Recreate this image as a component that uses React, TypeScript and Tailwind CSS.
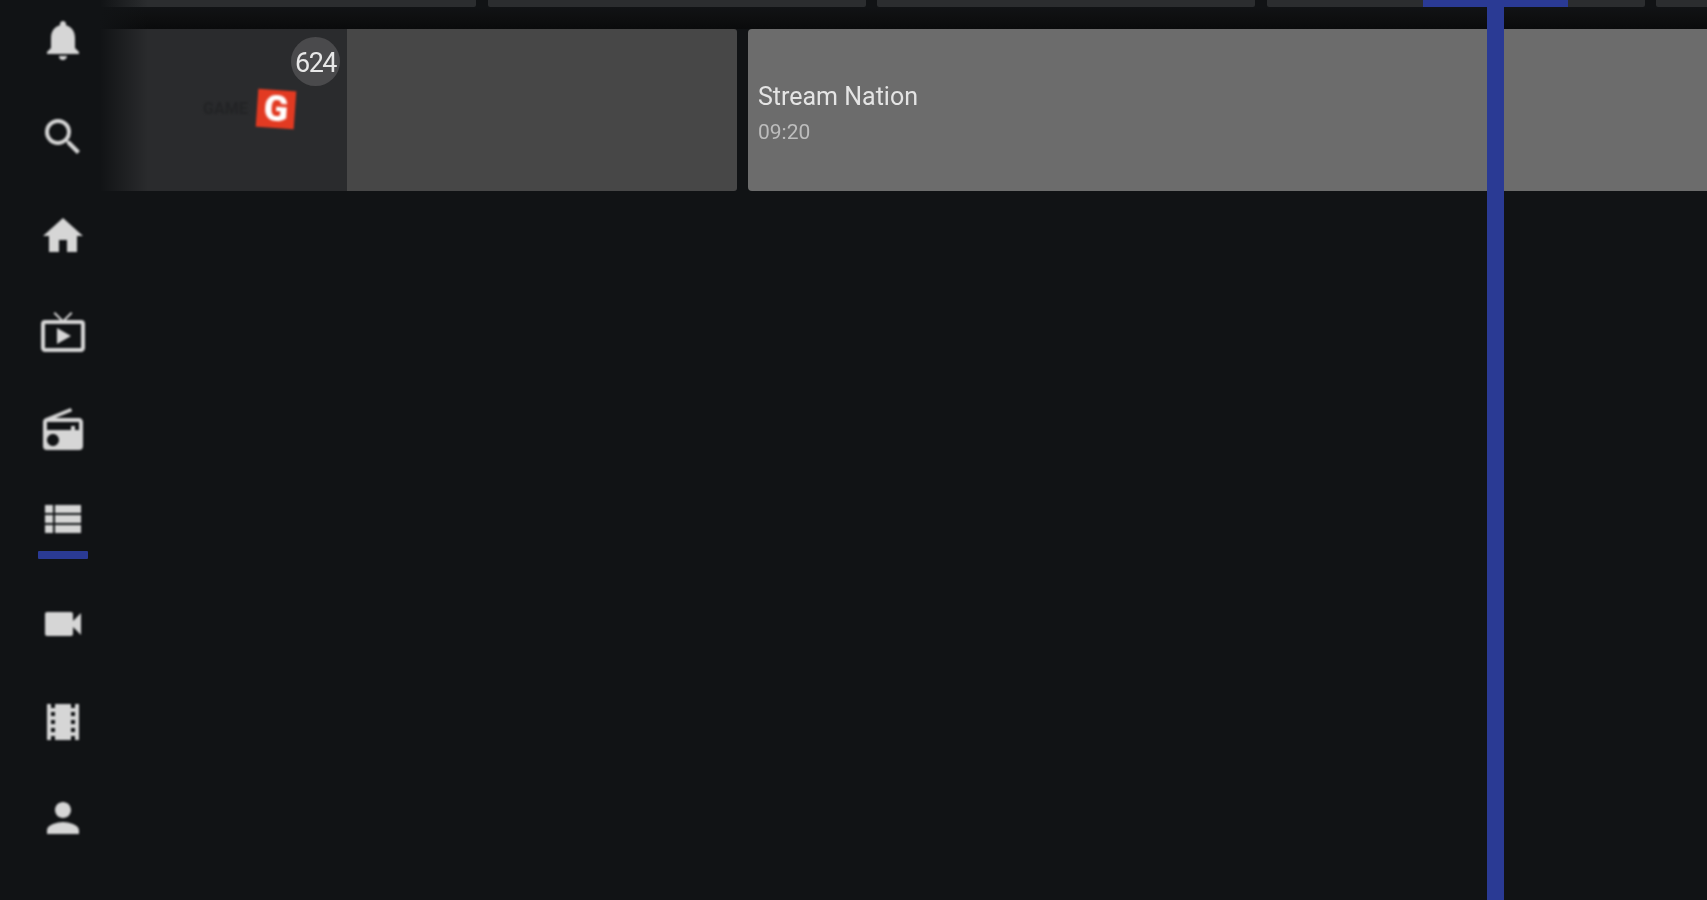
import { MdNotifications, MdSearch, MdHome, MdLiveTv, MdRadio, MdViewList, MdVideocam, MdLocalMovies, MdPerson } from "react-icons/md";

const navItems = [
  { icon: MdNotifications, gap: "mt-[16px]" },
  { icon: MdSearch, gap: "mt-[49px]" },
  { icon: MdHome, gap: "mt-[51px]" },
  { icon: MdLiveTv, gap: "mt-[48px]" },
  { icon: MdRadio, gap: "mt-[50px]" },
  { icon: MdViewList, gap: "mt-[41px]", active: true },
  { icon: MdVideocam, gap: "mt-[57px]" },
  { icon: MdLocalMovies, gap: "mt-[50px]" },
  { icon: MdPerson, gap: "mt-[48px]" },
];

function Sidebar() {
  return (
    <aside className="flex w-[100px] shrink-0 flex-col items-start bg-[#111315] pl-[39px]">
      {navItems.map((item, i) => (
        <div key={i} className={`relative h-[48px] w-[48px] shrink-0 ${item.gap}`}>
          <item.icon className="h-[48px] w-[48px] text-[#d6d6d6] blur-[0.8px]" />
          {item.active && (
            <div className="absolute left-[-1px] top-[56px] h-[8px] w-[50px] rounded-[1px] bg-[#2a3a94] blur-[0.4px]" />
          )}
        </div>
      ))}
    </aside>
  );
}

function ChannelLogo() {
  return (
    <div className="absolute left-[103px] top-[61px] flex items-center gap-[9px]">
      <span className="text-[16px] font-bold leading-[14px] text-[#222325] blur-[1px]">GAME</span>
      <div className="flex h-[38px] w-[38px] rotate-[4deg] items-center justify-center bg-[#e23a22] text-[36px] font-black leading-none text-white blur-[0.8px]">
        G
      </div>
    </div>
  );
}

export default function App() {
  return (
    <div className="flex h-screen w-full overflow-hidden bg-[#111315] font-['Roboto',sans-serif]">
      <Sidebar />

      <main className="relative min-w-0 flex-1 overflow-hidden">
        {/* previous channel row, mostly scrolled off */}
        <div className="flex h-[7px]">
          <div className="w-[376px] shrink-0 rounded-b-[2px] bg-[#2b2d2f]" />
          <div className="ml-[12px] w-[378px] shrink-0 rounded-b-[2px] bg-[#2b2d2f]" />
          <div className="ml-[11px] w-[378px] shrink-0 rounded-b-[2px] bg-[#2b2d2f]" />
          <div className="ml-[12px] w-[378px] shrink-0 rounded-b-[2px] bg-[#2b2d2f]" />
          <div className="ml-[11px] flex-1 rounded-bl-[2px] bg-[#2b2d2f]" />
        </div>
        <div className="h-[22px] bg-gradient-to-b from-[#111315] via-[#0e0f10] to-[#0a0b0c]" />

        <div className="flex h-[162px]">
          <div className="relative w-[247px] shrink-0 bg-[#2a2b2d]">
            <ChannelLogo />
            <div className="absolute left-[191px] top-[8px] flex h-[49px] w-[49px] items-center justify-center rounded-full bg-[#4a4a4c] pt-[3px] text-[27px] tracking-[-1.5px] text-[#e8e8e8] blur-[0.6px]">
              624
            </div>
          </div>
          <div className="w-[390px] shrink-0 rounded-r-[3px] bg-[#474747]" />
          <div className="ml-[11px] flex flex-1 flex-col justify-center rounded-l-[4px] bg-[#6c6c6c] pl-[10px] pt-[6px]">
            <span className="text-[25px] leading-[30px] text-[#e4e4e4] blur-[0.6px]">Stream Nation</span>
            <span className="mt-[7px] text-[21px] leading-[26px] text-[#bdbdbd] blur-[0.6px]">09:20</span>
          </div>
        </div>

        {/* sidebar fade over the grid's left edge */}
        <div className="absolute left-0 top-0 h-[191px] w-[48px] bg-gradient-to-r from-[#111315] to-transparent" />

        {/* now marker */}
        <div className="absolute left-[1323px] top-0 h-[7px] w-[145px] bg-[#2a3a94]" />
        <div className="absolute bottom-0 left-[1387px] top-0 w-[17px] bg-[#2a3a94]" />
      </main>
    </div>
  );
}
